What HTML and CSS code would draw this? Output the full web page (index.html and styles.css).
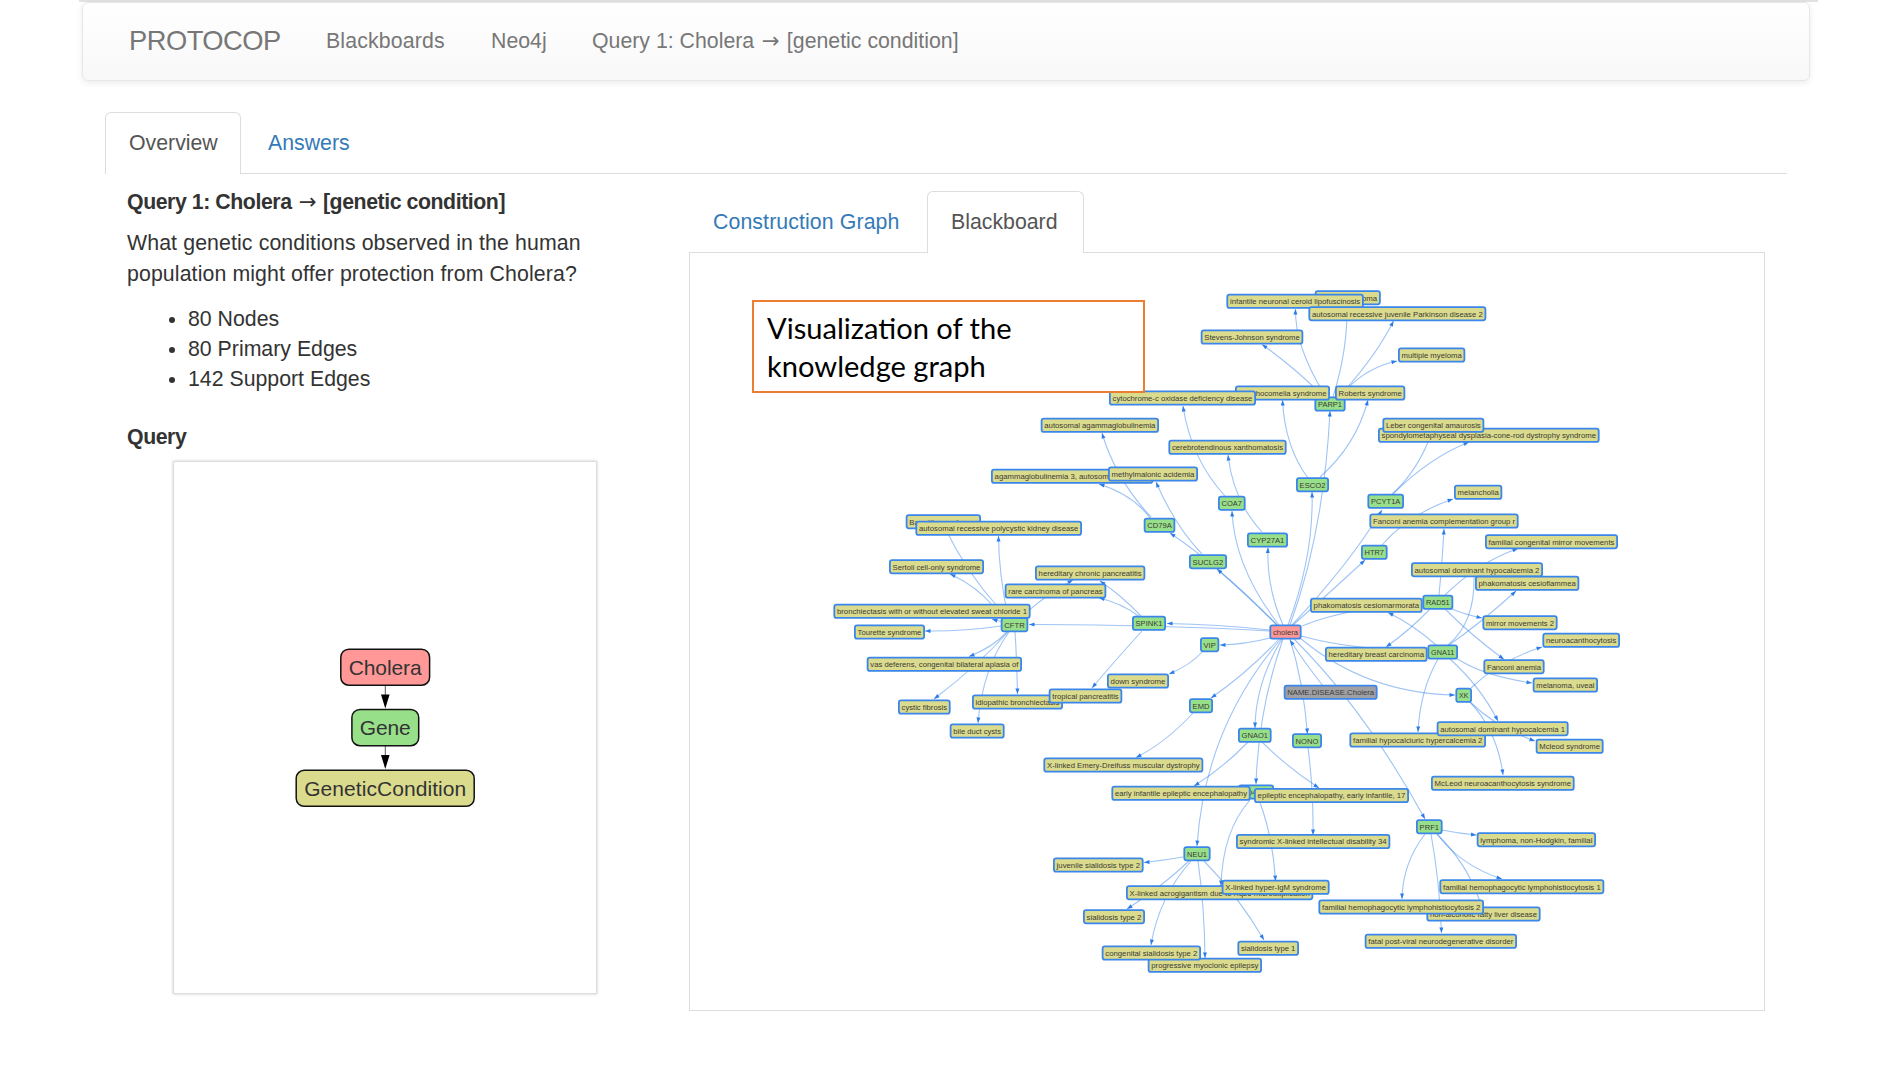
FILE: index.html
```html
<!DOCTYPE html>
<html lang="en">
<head>
<meta charset="utf-8">
<title>Protocop</title>
<link rel="stylesheet" href="styles.css">
</head>
<body>
<div class="topline"></div>
<nav class="navbar">
  <a class="brand">PROTOCOP</a>
  <a class="nav-boards">Blackboards</a>
  <a class="nav-neo">Neo4j</a>
  <a class="nav-query">Query 1: Cholera <span class="arrow">→</span> [genetic condition]</a>
</nav>
<main class="page">
  <div class="tabs">
    <a class="tab active overview">Overview</a>
    <a class="tab answers">Answers</a>
  </div>
  <div class="columns">
    <section class="summary">
      <h4 class="title">Query 1: Cholera <span class="arrow">→</span> [genetic condition]</h4>
      <p class="question">What genetic conditions observed in the human<br>population might offer protection from Cholera?</p>
      <ul class="stats">
        <li>80 Nodes</li>
        <li>80 Primary Edges</li>
        <li>142 Support Edges</li>
      </ul>
      <h4 class="query-head">Query</h4>
      <div class="query-box">
        <svg class="query-graph" viewBox="174 462 422 531" width="422" height="531">
          <path class="q-edge" d="M385.3 686V706M385.3 746V767"/>
          <path class="q-arrow" d="M381 694.5h8.6l-4.3 14zM381 755h8.6l-4.3 14z"/>
          <rect class="q-node disease" x="340.8" y="649.2" width="88.8" height="36" rx="8"/>
          <rect class="q-node gene" x="351.9" y="709.5" width="66.8" height="36.2" rx="8"/>
          <rect class="q-node condition" x="296.2" y="770.3" width="178" height="36" rx="8"/>
          <text class="q-label" x="385.2" y="674.5" textLength="73">Cholera</text>
          <text class="q-label" x="385.2" y="735" textLength="51">Gene</text>
          <text class="q-label" x="385.2" y="796" textLength="162">GeneticCondition</text>
        </svg>
      </div>
    </section>
    <section class="viewer">
      <div class="tabs">
        <a class="tab construction">Construction Graph</a>
        <a class="tab active blackboard">Blackboard</a>
      </div>
      <div class="panel">
        <svg id="graph" class="graph" viewBox="690 253 1074 756" width="1074" height="756"></svg>
        <div class="callout">Visualization of the<br>knowledge graph</div>
      </div>
    </section>
  </div>
</main>
<script src="graph.js"></script>
</body>
</html>
```
FILE: styles.css
```css
* { box-sizing: border-box; }
body {
  margin: 0;
  height: 1069px;
  overflow: hidden;
  background: #fff;
  color: #333;
  font: 21.3px/30.3px "Liberation Sans", Arial, sans-serif;
}
.topline { height: 2px; margin: 0 82px 0 79px; background: #e2e2e2; }
.navbar {
  display: flex;
  align-items: center;
  height: 79px;
  margin: 0 90px 0 82px;
  padding-left: 46px;
  border: 1.5px solid #e7e7e7;
  border-radius: 6px;
  background: linear-gradient(#fff, #f8f8f8);
  box-shadow: 0 2px 6px rgba(0, 0, 0, .08);
  color: #777;
  white-space: nowrap;
}
.brand { width: 197px; font-size: 27.3px; letter-spacing: -.5px; }
.nav-boards { width: 165px; letter-spacing: .15px; }
.nav-neo { width: 101px; }
.arrow {
  margin: 0 1.5px;
  font-family: "DejaVu Sans", sans-serif;
  font-weight: normal;
  line-height: 1;
}
.page { padding: 31px 113px 0 105px; }
.tabs { display: flex; border-bottom: 1px solid #ddd; }
.tab {
  height: 62px;
  margin-bottom: -1px;
  padding: 15px 23px 0;
  border: 1.5px solid transparent;
  border-bottom: 0;
  border-radius: 6px 6px 0 0;
  color: #337ab7;
  white-space: nowrap;
}
.tab.active { border-color: #ddd; background: #fff; color: #555; }
.overview { width: 136px; }
.answers { margin-left: 3px; }
.columns { display: flex; }
.summary { width: 584px; padding: 17px 0 0 22px; }
h4 { margin: 0; font-size: 21.3px; line-height: 23.3px; letter-spacing: -.44px; white-space: nowrap; }
.title { height: 23.3px; margin-bottom: 14px; }
.question { margin: 0 0 15px; letter-spacing: .11px; white-space: nowrap; }
.stats { margin: 0 0 31px; padding-left: 61px; }
.query-box {
  width: 424px;
  height: 533px;
  margin: 12px 0 0 46px;
  border: 1px solid #ddd;
  box-shadow: 0 0 3px rgba(0, 0, 0, .2);
}
.query-graph, .graph { display: block; }
.q-edge { stroke: #555; stroke-width: 1; fill: none; }
.q-arrow { fill: #000; }
.q-node { stroke: #111; stroke-width: 1.5; }
.q-label { font-size: 21px; fill: #333; text-anchor: middle; }
.disease { fill: #ff9896; }
.gene { fill: #98df8a; }
.condition { fill: #dbdb8d; }
.name { fill: #a0a0a4; }
.viewer { width: 1076px; padding-top: 17px; }
.construction { width: 238px; letter-spacing: .1px; }
.blackboard { width: 157px; }
.panel { position: relative; height: 758px; border: 1px solid #ddd; border-top: 0; }
.callout {
  position: absolute;
  left: 62px;
  top: 47px;
  width: 393px;
  height: 93px;
  padding: 7px 0 0 13px;
  border: 2px solid #ed7d31;
  background: #fff;
  color: #000;
  font: 29.1px/38px Lato, sans-serif;
}
.edge { fill: none; stroke: #2b7ce9; stroke-opacity: .45; stroke-width: 1.1; }
.tip { fill: #2b7ce9; }
.node { stroke: #3a86ea; stroke-width: 1.8; }
.label { font-size: 8.1px; fill: #3a3a36; }
```
FILE: graph.js
```js
// Edges: start, point at the middle of the curve, end; a trailing 0 omits the arrowhead.
const edges = [
  [1323,392,1302,348,1295.5,309],[1318,391,1290,366,1262,344.5],[1333,397,1344,350,1347,305,0],
  [1345,390,1373,355,1393.5,321],[1348,388,1370,371,1397,361],[1308,478,1290,443,1282.5,400],
  [1320,477,1350,442,1368,400],[1290,625,1317,525,1330,411],[1288,625,1307,557,1312,492],
  [1279,625,1245,568,1232,511],[1283,625,1271,587,1268,547.5],[1277,625,1248,597,1217,569],
  [1277,625,1222,573,1170,533],[1202,554,1177,522,1156,482],[1151,517,1121,477,1102,433],
  [1150,518,1129,498,1099,484],[1262,532,1239,497,1228,455],[1225,496,1197.5,455,1183,406],
  [1270,630,1218,625.5,1167,623.5],[1270,631,1150,626,1029,624.5],[1270,638,1245,643,1220,645],
  [1202,652,1188,664,1169,674],[1279,639,1247,670,1211,698],[1193,713,1165,739,1136,757.5],
  [1281,639,1222,735,1197,846],[1282,639,1262,683,1255,728],[1283,639,1264,710,1256,784],
  [1248,742,1222,766,1194,786],[1262,742,1290,767,1319,788],[1250,800,1229,837,1221,886],
  [1259,800,1270,838,1275.5,881],[1308,748,1312,790,1313,835],[1290,639,1301,684,1307.5,734],
  [1323,686,1305,662,1290,640],[1294,639,1362,719,1425,819],[1300,638,1372,680,1455,695],
  [1301,636,1360,647,1427,650,0],[1302,626,1355,611,1422,604,0],[1293,625,1330,592,1365,560],
  [1292,625,1343,566,1382,510],[1382,545,1413,518,1453,499],[1392,494,1415,467,1433,430,0],
  [1393,494,1430,463,1469,442],[1439,595,1442,560,1444,529],[1445,595,1480,567,1518,548.5],
  [1452,609,1466,614,1482,618],[1445,609,1472,634,1504,659.5],[1430,609,1409,629,1386,647],
  [1436,645,1413,627,1388,612.5],[1449,645,1481,621,1516,591],[1448,645,1468,617,1474,577,0],
  [1456,658,1488,673,1532,683],[1450,659,1477,688,1498,721],[1438,659,1424,693,1418,732],
  [1471,688,1503,664,1542,647],[1470,702,1500,725,1535,741],[1470,702,1492,735,1503,775],
  [1141,616,1121,597,1100,581],[1140,617,1120,605,1099,598],[1142,631,1116,660,1092,688],
  [1027,612,1050,594,1073,580],[1008,617,1001,575,998.5,536],[998,607,969,570,945,528,0],
  [994,607,974,588,950,574],[1003,622,997,620.5,992,619],[1001,626,963,630,925,631],
  [1007,632,990,646,969,656.5],[1008,632,974,666,934,699],[1015,632,1016.5,660,1017.5,694],
  [1009,632,988,673,978,723],[1183,857,1164,860,1144,862.5],[1190,860,1161,885,1127,909],
  [1191,861,1165,900,1151,945],[1198,861,1203,908,1205,958],[1204,861,1236,898,1264,940],
  [1442,830,1459,833,1476.5,835],[1437,834,1465,861,1502,879],[1437,834,1463,866,1480,902,0],
  [1425,834,1408,865,1402,899],[1431,834,1438,883,1441.5,933]
];

// Nodes in paint order: left, right, vertical centre, label, kind.
const nodes = [
  [1315,1380.5,297.7,"medulloblastoma"],[1226.7,1363.5,301.3,"infantile neuronal ceroid lipofuscinosis"],
  [1308.7,1486,313.7,"autosomal recessive juvenile Parkinson disease 2"],
  [1201,1303,337,"Stevens-Johnson syndrome"],[1398.3,1465,355,"multiple myeloma"],
  [1314.7,1345.3,404,"PARP1","gene"],[1235.3,1329.7,393,"SC phocomelia syndrome"],
  [1335.3,1405,393,"Roberts syndrome"],[1109.3,1255.7,398,"cytochrome-c oxidase deficiency disease"],
  [1041,1158.7,425.3,"autosomal agammaglobulinemia"],[1168.7,1286.3,447.3,"cerebrotendinous xanthomatosis"],
  [991.3,1153,476.3,"agammaglobulinemia 3, autosomal recessive"],[1108.3,1197.7,474,"methylmalonic acidemia"],
  [1296.3,1328.7,484.7,"ESCO2","gene"],[1218.3,1245.3,503.3,"COA7","gene"],[1367.7,1403.7,501.3,"PCYT1A","gene"],
  [1378.3,1599.3,435.3,"spondylometaphyseal dysplasia-cone-rod dystrophy syndrome"],
  [1382.7,1484,425.3,"Leber congenital amaurosis"],[1454.3,1502,492.3,"melancholia"],
  [1369.7,1518.3,521,"Fanconi anemia complementation group r"],
  [1485.3,1617.7,541.7,"familial congenital mirror movements"],
  [1411.3,1542.7,569.7,"autosomal dominant hypocalcemia 2"],[1475.3,1579,583.3,"phakomatosis cesioflammea"],
  [1310.3,1422.3,605.3,"phakomatosis cesiomarmorata"],[1422.7,1453,602.3,"RAD51","gene"],
  [1482.7,1557.3,622.7,"mirror movements 2"],[1542.7,1619.7,640.3,"neuroacanthocytosis"],
  [1483.7,1544.3,666.7,"Fanconi anemia"],[1533,1597.7,685,"melanoma, uveal"],
  [1325.3,1427.3,654.3,"hereditary breast carcinoma"],[1427.7,1457.7,652,"GNA11","gene"],
  [1455.7,1471.7,695.3,"XK","gene"],[1349.7,1485.7,740,"familial hypocalciuric hypercalcemia 2"],
  [1437,1568.3,728.7,"autosomal dominant hypocalcemia 1"],[1536,1603.3,746.3,"Mcleod syndrome"],
  [1431.3,1574.3,783.3,"McLeod neuroacanthocytosis syndrome"],[1284,1377.3,692.3,"NAME.DISEASE.Cholera","name"],
  [1269.7,1301.3,632,"cholera","disease"],[1292.3,1321.7,740.7,"NONO","gene"],[1238.3,1271.3,735.3,"GNAO1","gene"],
  [1189.3,1212.7,705.7,"EMD","gene"],[1200.3,1219,644.7,"VIP","gene"],[1107.3,1168.7,681,"down syndrome"],
  [1132.3,1165.7,623.3,"SPINK1","gene"],[1189.3,1226.7,561.7,"SUCLG2","gene"],
  [1247.3,1287.7,540,"CYP27A1","gene"],[1144,1175,525.3,"CD79A","gene"],[1361.3,1387.3,552.3,"HTR7","gene"],
  [906,980.7,521.7,"Barrett's esophagus"],[915.7,1081.7,528.3,"autosomal recessive polycystic kidney disease"],
  [889.3,983.7,566.7,"Sertoli cell-only syndrome"],[1035.3,1145,573,"hereditary chronic pancreatitis"],
  [1005,1106,591,"rare carcinoma of pancreas"],[1001,1028,624.7,"CFTR","gene"],
  [833.7,1030.3,611.3,"bronchiectasis with or without elevated sweat chloride 1"],
  [854.3,924.7,632,"Tourette syndrome"],[867,1021.7,664.3,"vas deferens, congenital bilateral aplasia of"],
  [898.3,950.3,707,"cystic fibrosis"],[972.3,1062.7,702,"idiopathic bronchiectasis"],
  [1049,1122,696,"tropical pancreatitis"],[950,1004.3,731,"bile duct cysts"],
  [1043.7,1203,765,"X-linked Emery-Dreifuss muscular dystrophy"],[1238.3,1273.7,792,"CD40LG","gene"],
  [1111.7,1250.3,793.3,"early infantile epileptic encephalopathy"],
  [1254.3,1408.7,795.5,"epileptic encephalopathy, early infantile, 17"],
  [1236.3,1390,841.5,"syndromic X-linked intellectual disability 34"],[1183.7,1210.3,853.7,"NEU1","gene"],
  [1053.3,1143.3,865,"juvenile sialidosis type 2"],
  [1126.3,1313,892.7,"X-linked acrogigantism due to Xq26 microduplication"],
  [1222,1329.3,887.3,"X-linked hyper-IgM syndrome"],[1083.3,1144.7,916.7,"sialidosis type 2"],
  [1148,1261.7,965.3,"progressive myoclonic epilepsy"],[1102,1200.7,953,"congenital sialidosis type 2"],
  [1237.7,1298.7,948.3,"sialidosis type 1"],[1416.3,1442.3,826.7,"PRF1","gene"],
  [1477,1595.7,839.7,"lymphoma, non-Hodgkin, familial"],
  [1439.7,1604,886.7,"familial hemophagocytic lymphohistiocytosis 1"],
  [1426.7,1540.3,914,"non-alcoholic fatty liver disease"],
  [1318.7,1483.7,907,"familial hemophagocytic lymphohistiocytosis 2"],
  [1365,1516.7,941.3,"fatal post-viral neurodegenerative disorder"]
];

const graph = document.getElementById("graph");

function add(tag, attrs, text) {
  const el = document.createElementNS("http://www.w3.org/2000/svg", tag);
  for (const key in attrs) el.setAttribute(key, attrs[key]);
  if (text) el.textContent = text;
  graph.appendChild(el);
}

for (const [x1, y1, mx, my, x2, y2, arrow = 1] of edges) {
  const cx = 2 * mx - (x1 + x2) / 2;
  const cy = 2 * my - (y1 + y2) / 2;
  add("path", { class: "edge", d: `M${x1} ${y1}Q${cx} ${cy} ${x2} ${y2}` });
  if (arrow) {
    const angle = Math.atan2(y2 - cy, x2 - cx) * 180 / Math.PI;
    add("path", { class: "tip", d: "M0 0L-5.5 2L-5.5 -2Z", transform: `translate(${x2} ${y2}) rotate(${angle})` });
  }
}

for (const [left, right, mid, label, kind = "condition"] of nodes) {
  add("rect", { class: "node " + kind, x: left + .6, y: mid - 6.6, width: right - left - 1.2, height: 13.2, rx: 2.2 });
  add("text", { class: "label", x: left + 3.3, y: mid + 2.8, textLength: right - left - 6.6, lengthAdjust: "spacingAndGlyphs" }, label);
}
```
